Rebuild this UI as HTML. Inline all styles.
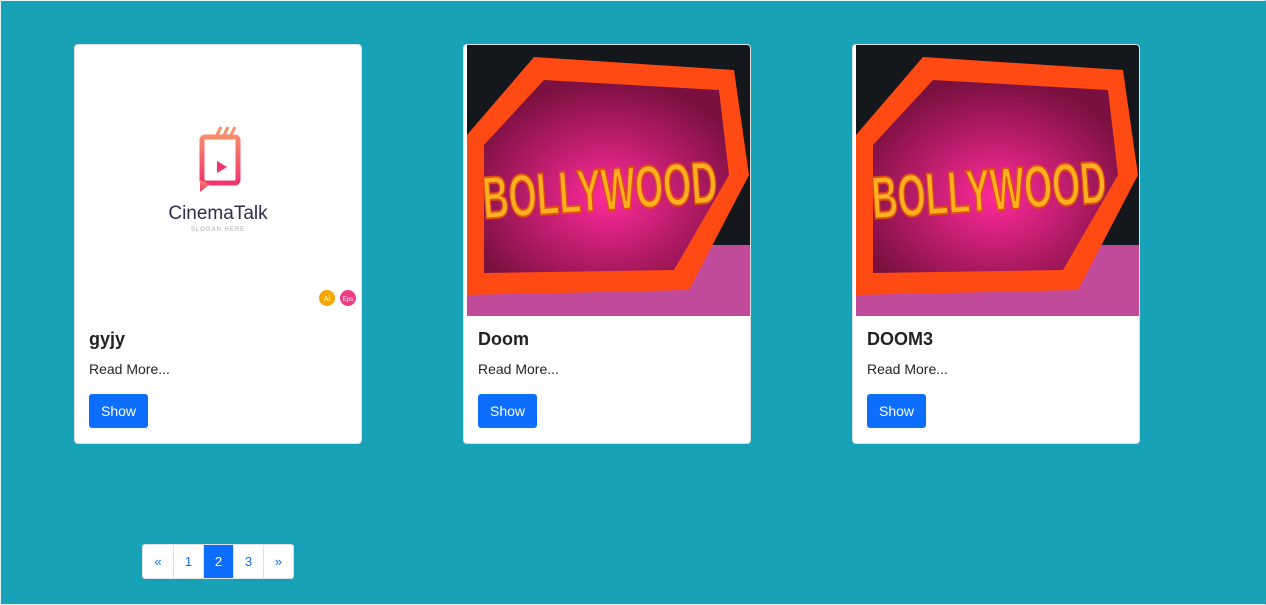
<!DOCTYPE html>
<html><head><style>
body{margin:0;width:1266px;height:605px;background:#18a2b8;font-family:"Liberation Sans",sans-serif;position:relative;overflow:hidden}
.frame{position:absolute;left:0;top:0;width:1264px;height:603px;border:1px solid #e6f4f6;border-right-color:#18a2b8}
.card{position:absolute;top:44px;width:286px;height:398px;background:#fff;border:1px solid #ddd;border-radius:4px;overflow:hidden}
.img{position:absolute;left:0;top:0;width:286px;height:271px}
.t{position:absolute;left:14px;top:284px;font-size:18px;color:#222;font-weight:bold}
.r{position:absolute;left:14px;top:316px;font-size:14px;color:#222}
.b{position:absolute;left:14px;top:349px;width:59px;height:34px;background:#0d6efd;color:#fff;border-radius:3px;font-size:14px;line-height:34px;text-align:center}
.pg{position:absolute;left:142px;top:544px;display:flex;background:#fff;border:1px solid #dee2e6;border-radius:3px}
.pg div{width:29px;height:33px;line-height:33px;text-align:center;color:#0d6efd;font-size:13px;border-left:1px solid #dee2e6}
.pg div:first-child{border-left:none;width:30px}
.pg .a{background:#0d6efd;color:#fff}
</style></head><body>
<div class="frame"></div>
<div class="card" style="left:74px">
<svg class="img" viewBox="0 0 286 271">
<defs><linearGradient id="lg" x1="0" y1="0" x2="0" y2="1"><stop offset="0" stop-color="#f98a6a"/><stop offset="1" stop-color="#f2336e"/></linearGradient></defs>
<rect x="127" y="92" width="36" height="46" rx="3" fill="none" stroke="url(#lg)" stroke-width="5"/>
<path d="M125 135 v12 l10 -8" fill="url(#lg)"/>
<path d="M142 116 l10 6 l-10 6z" fill="#f2336e"/>
<path d="M142 90 l4 -8 M149 90 l4 -8 M156 90 l4 -8" stroke="#f98a6a" stroke-width="3"/>
<text x="143" y="174" text-anchor="middle" font-size="19" fill="#2d2c4a" font-family="Liberation Sans">CinemaTalk</text>
<text x="143" y="186" text-anchor="middle" font-size="6" fill="#aaa" letter-spacing="1">SLOGAN HERE</text>
<circle cx="252" cy="253" r="8" fill="#f7a600"/><text x="252" y="256" text-anchor="middle" font-size="7" fill="#fff">Ai</text>
<circle cx="273" cy="253" r="8" fill="#f03c86"/><text x="273" y="256" text-anchor="middle" font-size="6" fill="#fff">Eps</text>
</svg>
<div class="t">gyjy</div><div class="r">Read More...</div><div class="b">Show</div></div>
<div class="card" style="left:463px"><svg class="img" viewBox="0 0 286 271"><rect width="3" height="271" fill="#fff"/><use href="#bw"/></svg>
<div class="t">Doom</div><div class="r">Read More...</div><div class="b">Show</div></div>
<div class="card" style="left:852px"><svg class="img" viewBox="0 0 286 271"><rect width="3" height="271" fill="#fff"/><use href="#bw"/></svg>
<div class="t">DOOM3</div><div class="r">Read More...</div><div class="b">Show</div></div>
<svg width="0" height="0" style="position:absolute"><defs>
<radialGradient id="pk" cx="0.5" cy="0.6" r="0.6"><stop offset="0" stop-color="#ff2a9a"/><stop offset="1" stop-color="#7a1040"/></radialGradient>
<g id="bw"><rect x="3" width="283" height="271" fill="#14181c"/>
<rect x="3" y="200" width="283" height="71" fill="#c24a9a"/>
<polygon points="3,90 70,12 270,25 285,130 225,245 3,250" fill="#ff4a14"/>
<polygon points="20,100 80,35 255,45 265,130 210,225 20,228" fill="url(#pk)"/>
<text x="18" y="165" font-size="60" font-weight="bold" fill="#ffb020" stroke="#e05010" stroke-width="2" font-family="Liberation Sans" textLength="235" lengthAdjust="spacingAndGlyphs" transform="rotate(-4 145 140)">BOLLYWOOD</text>
</g></defs></svg>
<div class="pg"><div>«</div><div>1</div><div class="a">2</div><div>3</div><div>»</div></div>
</body></html>
